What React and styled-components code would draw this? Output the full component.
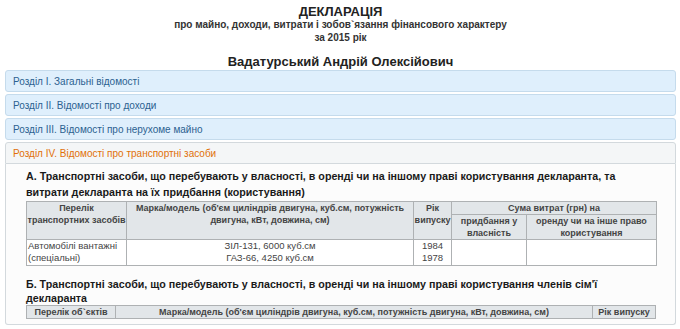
import React from 'react'
import styled, { createGlobalStyle } from 'styled-components'

const GlobalStyle = createGlobalStyle`
  body {
    margin: 0;
    background: #ffffff;
    font-family: "Liberation Sans", Arial, sans-serif;
    color: #222222;
  }
`

const Page = styled.div`
  padding: 6px 4px 0 5px;
`

const Heading = styled.div`
  text-align: center;
  color: #222;
`
const Title = styled.div`
  font-size: 13px;
  font-weight: bold;
  line-height: 12px;
`
const Subtitle = styled.div`
  font-size: 10px;
  font-weight: bold;
  line-height: 13px;
  color: #333;
`
const Person = styled.div`
  font-size: 13px;
  font-weight: bold;
  line-height: 14px;
  margin-top: 11px;
  margin-bottom: 1px;
`

const Accordion = styled.div`
  display: flex;
  flex-direction: column;
  gap: 2px;
`
const Section = styled.div`
  display: flex;
  flex-direction: column;
`
const SectionHeader = styled.div`
  box-sizing: border-box;
  display: flex;
  align-items: center;
  height: 22px;
  padding-left: 7px;
  font-size: 10px;
  border: 1px solid ${p => (p.active ? '#d3d9dd' : '#c5dbec')};
  background: ${p => (p.active ? '#f4f6f7' : '#dfeffc')};
  color: ${p => (p.active ? '#e17009' : '#2b6190')};
  border-radius: ${p => (p.active ? '3px 3px 0 0' : '3px')};
`
const SectionBody = styled.div`
  border: 1px solid #d3d9dd;
  border-top: 0;
  border-radius: 0 0 3px 3px;
  background: #fcfcfc;
  padding: 4px 20px 5px 20px;
`
const Caption = styled.div`
  font-size: 10.7px;
  font-weight: bold;
  line-height: ${p => p.lh || 16}px;
  color: #1a1a1a;
  margin-top: ${p => p.gap || 0}px;
  margin-bottom: ${p => (p.gap ? 0 : 1)}px;
`

const Table = styled.table`
  border-collapse: collapse;
  width: 630px;
  color: #333;
  table-layout: fixed;
`
const Th = styled.th`
  border: 1px solid #aeb1b3;
  background: #e2e6e9;
  font-size: 9px;
  font-weight: bold;
  text-align: center;
  vertical-align: top;
  line-height: 12px;
  padding: 0;
  color: #444;
`
const Td = styled.td`
  border: 1px solid #aeb1b3;
  background: #ffffff;
  font-size: 9.5px;
  text-align: ${p => p.align || 'center'};
  vertical-align: top;
  line-height: 12px;
  padding: 0 1px 1px;
  color: #444;
`

const sections = [
  'Розділ I. Загальні відомості',
  'Розділ II. Відомості про доходи',
  'Розділ III. Відомості про нерухоме майно'
]

export default function App() {
  return (
    <Page>
      <GlobalStyle />
      <Heading>
        <Title>ДЕКЛАРАЦІЯ</Title>
        <Subtitle>про майно, доходи, витрати і зобов`язання фінансового характеру</Subtitle>
        <Subtitle>за 2015 рік</Subtitle>
        <Person>Вадатурський Андрій Олексійович</Person>
      </Heading>
      <Accordion>
        {sections.map(s => (
          <SectionHeader key={s}>{s}</SectionHeader>
        ))}
        <Section>
          <SectionHeader active>Розділ IV. Відомості про транспортні засоби</SectionHeader>
          <SectionBody>
            <Caption>
              А. Транспортні засоби, що перебувають у власності, в оренді чи на іншому праві користування декларанта, та
              витрати декларанта на їх придбання (користування)
            </Caption>
            <Table>
              <colgroup>
                <col style={{ width: 100 }} />
                <col style={{ width: 287 }} />
                <col style={{ width: 38 }} />
                <col style={{ width: 75 }} />
                <col style={{ width: 130 }} />
              </colgroup>
              <thead>
                <tr>
                  <Th rowSpan={2}>Перелік транспортних засобів</Th>
                  <Th rowSpan={2}>Марка/модель (об'єм циліндрів двигуна, куб.см, потужність двигуна, кВт, довжина, см)</Th>
                  <Th rowSpan={2}>Рік випуску</Th>
                  <Th colSpan={2}>Сума витрат (грн) на</Th>
                </tr>
                <tr>
                  <Th>придбання у власність</Th>
                  <Th>оренду чи на інше право користування</Th>
                </tr>
              </thead>
              <tbody>
                <tr>
                  <Td align="left">Автомобілі вантажні (спеціальні)</Td>
                  <Td>ЗІЛ-131, 6000 куб.см<br />ГАЗ-66, 4250 куб.см</Td>
                  <Td>1984<br />1978</Td>
                  <Td />
                  <Td />
                </tr>
              </tbody>
            </Table>
            <Caption gap={11} lh={14}>
              Б. Транспортні засоби, що перебувають у власності, в оренді чи на іншому праві користування членів сім'ї
              декларанта
            </Caption>
            <Table>
              <colgroup>
                <col style={{ width: 89 }} />
                <col style={{ width: 477 }} />
                <col style={{ width: 63 }} />
              </colgroup>
              <thead>
                <tr>
                  <Th>Перелік об`єктів</Th>
                  <Th>Марка/модель (об'єм циліндрів двигуна, куб.см, потужність двигуна, кВт, довжина, см)</Th>
                  <Th>Рік випуску</Th>
                </tr>
              </thead>
            </Table>
          </SectionBody>
        </Section>
      </Accordion>
    </Page>
  )
}
